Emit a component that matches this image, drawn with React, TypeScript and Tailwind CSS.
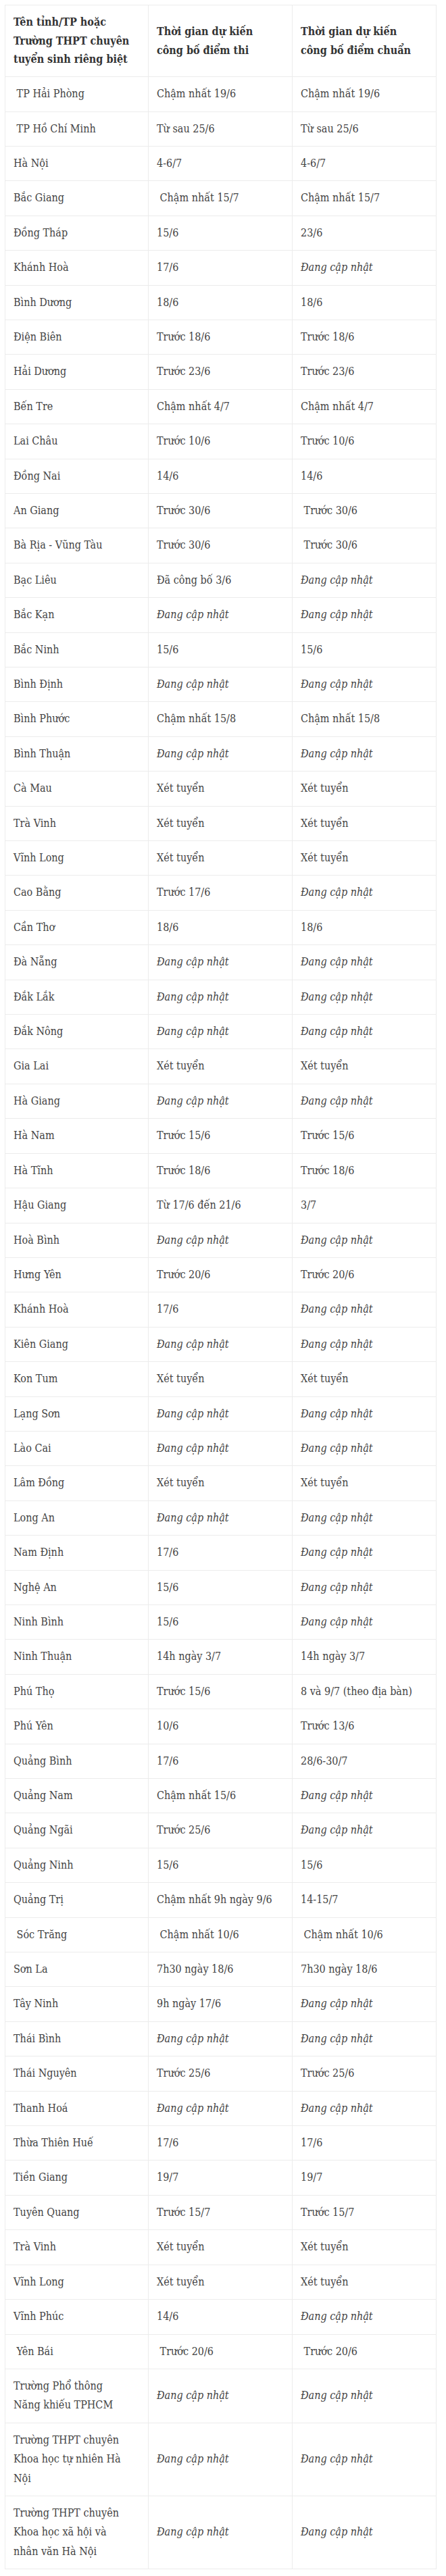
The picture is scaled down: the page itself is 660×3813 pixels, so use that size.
import React from "react";

const U = "Đang cập nhật";
const X = "Xét tuyển";
const S = "\u00a0";

type Row = [string, string, string];

const rows: Row[] = [
  [S + "TP Hải Phòng", "Chậm nhất 19/6", "Chậm nhất 19/6"],
  [S + "TP Hồ Chí Minh", "Từ sau 25/6", "Từ sau 25/6"],
  ["Hà Nội", "4-6/7", "4-6/7"],
  ["Bắc Giang", S + "Chậm nhất 15/7", "Chậm nhất 15/7"],
  ["Đồng Tháp", "15/6", "23/6"],
  ["Khánh Hoà", "17/6", U],
  ["Bình Dương", "18/6", "18/6"],
  ["Điện Biên", "Trước 18/6", "Trước 18/6"],
  ["Hải Dương", "Trước 23/6", "Trước 23/6"],
  ["Bến Tre", "Chậm nhất 4/7", "Chậm nhất 4/7"],
  ["Lai Châu", "Trước 10/6", "Trước 10/6"],
  ["Đồng Nai", "14/6", "14/6"],
  ["An Giang", "Trước 30/6", S + "Trước 30/6"],
  ["Bà Rịa - Vũng Tàu", "Trước 30/6", S + "Trước 30/6"],
  ["Bạc Liêu", "Đã công bố 3/6", U],
  ["Bắc Kạn", U, U],
  ["Bắc Ninh", "15/6", "15/6"],
  ["Bình Định", U, U],
  ["Bình Phước", "Chậm nhất 15/8", "Chậm nhất 15/8"],
  ["Bình Thuận", U, U],
  ["Cà Mau", X, X],
  ["Trà Vinh", X, X],
  ["Vĩnh Long", X, X],
  ["Cao Bằng", "Trước 17/6", U],
  ["Cần Thơ", "18/6", "18/6"],
  ["Đà Nẵng", U, U],
  ["Đắk Lắk", U, U],
  ["Đắk Nông", U, U],
  ["Gia Lai", X, X],
  ["Hà Giang", U, U],
  ["Hà Nam", "Trước 15/6", "Trước 15/6"],
  ["Hà Tĩnh", "Trước 18/6", "Trước 18/6"],
  ["Hậu Giang", "Từ 17/6 đến 21/6", "3/7"],
  ["Hoà Bình", U, U],
  ["Hưng Yên", "Trước 20/6", "Trước 20/6"],
  ["Khánh Hoà", "17/6", U],
  ["Kiên Giang", U, U],
  ["Kon Tum", X, X],
  ["Lạng Sơn", U, U],
  ["Lào Cai", U, U],
  ["Lâm Đồng", X, X],
  ["Long An", U, U],
  ["Nam Định", "17/6", U],
  ["Nghệ An", "15/6", U],
  ["Ninh Bình", "15/6", U],
  ["Ninh Thuận", "14h ngày 3/7", "14h ngày 3/7"],
  ["Phú Thọ", "Trước 15/6", "8 và 9/7 (theo địa bàn)"],
  ["Phú Yên", "10/6", "Trước 13/6"],
  ["Quảng Bình", "17/6", "28/6-30/7"],
  ["Quảng Nam", "Chậm nhất 15/6", U],
  ["Quảng Ngãi", "Trước 25/6", U],
  ["Quảng Ninh", "15/6", "15/6"],
  ["Quảng Trị", "Chậm nhất 9h ngày 9/6", "14-15/7"],
  [S + "Sóc Trăng", S + "Chậm nhất 10/6", S + "Chậm nhất 10/6"],
  ["Sơn La", "7h30 ngày 18/6", "7h30 ngày 18/6"],
  ["Tây Ninh", "9h ngày 17/6", U],
  ["Thái Bình", U, U],
  ["Thái Nguyên", "Trước 25/6", "Trước 25/6"],
  ["Thanh Hoá", U, U],
  ["Thừa Thiên Huế", "17/6", "17/6"],
  ["Tiền Giang", "19/7", "19/7"],
  ["Tuyên Quang", "Trước 15/7", "Trước 15/7"],
  ["Trà Vinh", X, X],
  ["Vĩnh Long", X, X],
  ["Vĩnh Phúc", "14/6", U],
  [S + "Yên Bái", S + "Trước 20/6", S + "Trước 20/6"],
];

// schools: first cell breaks into fixed lines like the source
const schools: string[][] = [
  ["Trường Phổ thông", "Năng khiếu TPHCM"],
  ["Trường THPT chuyên", "Khoa học tự nhiên Hà", "Nội"],
  ["Trường THPT chuyên", "Khoa học xã hội và", "nhân văn Hà Nội"],
];

const td = "border border-[#ececec] px-3 py-[11px] leading-[28.4px] align-middle whitespace-nowrap";

const Cell = ({ text }: { text: string }) => (
  <td className={`${td} ${text === U ? "italic" : ""}`}>{text}</td>
);

const Lines = ({ lines }: { lines: string[] }) => (
  <>
    {lines.map((l, i) => (
      <React.Fragment key={i}>
        {i > 0 && <br />}
        {l}
      </React.Fragment>
    ))}
  </>
);

export default function App() {
  return (
    <div className="bg-white pt-[7px] pl-[7px] pb-[10px] font-['DejaVu_Serif',serif] [font-stretch:condensed] text-[16px] text-[#444]">
      <table className="w-[638px] table-fixed border-collapse">
        <colgroup>
          <col className="w-[212px]" />
          <col className="w-[213px]" />
          <col className="w-[213px]" />
        </colgroup>
        <thead>
          <tr className="font-bold text-[#333]">
            <th className="border border-[#ececec] px-3 py-[11px] text-left align-middle font-bold leading-[27.7px] whitespace-nowrap">
              <Lines lines={["Tên tỉnh/TP hoặc", "Trường THPT chuyên", "tuyển sinh riêng biệt"]} />
            </th>
            <th className="border border-[#ececec] px-3 py-[11px] text-left align-middle font-bold leading-[27.7px] whitespace-nowrap">
              <Lines lines={["Thời gian dự kiến", "công bố điểm thi"]} />
            </th>
            <th className="border border-[#ececec] px-3 py-[11px] text-left align-middle font-bold leading-[27.7px] whitespace-nowrap">
              <Lines lines={["Thời gian dự kiến", "công bố điểm chuẩn"]} />
            </th>
          </tr>
        </thead>
        <tbody>
          {rows.map((r, i) => (
            <tr key={i}>
              <Cell text={r[0]} />
              <Cell text={r[1]} />
              <Cell text={r[2]} />
            </tr>
          ))}
          {schools.map((s, i) => (
            <tr key={"s" + i}>
              <td className={td}>
                <Lines lines={s} />
              </td>
              <Cell text={U} />
              <Cell text={U} />
            </tr>
          ))}
        </tbody>
      </table>
    </div>
  );
}
